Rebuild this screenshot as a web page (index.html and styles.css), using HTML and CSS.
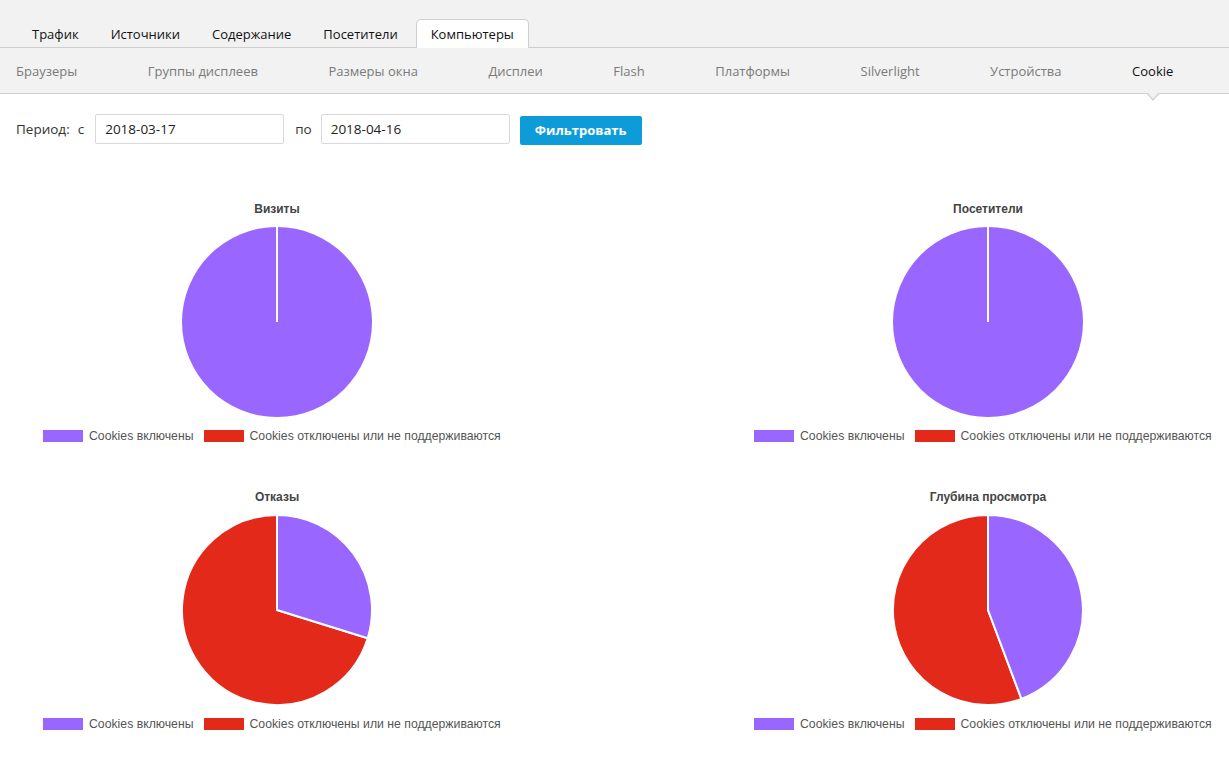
FILE: index.html
```html
<!DOCTYPE html>
<html lang="ru">
<head>
<meta charset="utf-8">
<title>Cookie</title>
<link rel="stylesheet" href="styles.css">
</head>
<body>
<div class="page">
  <header class="topbar">
    <nav class="tabs">
      <a class="tab">Трафик</a>
      <a class="tab">Источники</a>
      <a class="tab">Содержание</a>
      <a class="tab">Посетители</a>
      <a class="tab active">Компьютеры</a>
    </nav>
  </header>
  <nav class="subnav">
    <a class="subitem">Браузеры</a>
    <a class="subitem">Группы дисплеев</a>
    <a class="subitem">Размеры окна</a>
    <a class="subitem">Дисплеи</a>
    <a class="subitem">Flash</a>
    <a class="subitem">Платформы</a>
    <a class="subitem">Silverlight</a>
    <a class="subitem">Устройства</a>
    <a class="subitem current">Cookie</a>
  </nav>

  <form class="filter">
    <span class="lbl">Период:</span>
    <span class="lbl small">с</span>
    <input class="date" type="text" value="2018-03-17">
    <span class="lbl po">по</span>
    <input class="date" type="text" value="2018-04-16">
    <button class="btn" type="button">Фильтровать</button>
  </form>

  <section class="charts">
    <div class="chart">
      <div class="title">Визиты</div>
      <svg class="pie" viewBox="0 0 192 192" width="192" height="192">
        <circle cx="96" cy="96" r="95" fill="#9966ff"/>
        <line x1="96" y1="96" x2="96" y2="0" stroke="#fff" stroke-width="2"/>
      </svg>
      <div class="legend">
        <span class="sw purple"></span><span class="lt">Cookies включены</span>
        <span class="sw red"></span><span class="lt">Cookies отключены или не поддерживаются</span>
      </div>
    </div>
    <div class="chart">
      <div class="title">Посетители</div>
      <svg class="pie" viewBox="0 0 192 192" width="192" height="192">
        <circle cx="96" cy="96" r="95" fill="#9966ff"/>
        <line x1="96" y1="96" x2="96" y2="0" stroke="#fff" stroke-width="2"/>
      </svg>
      <div class="legend">
        <span class="sw purple"></span><span class="lt">Cookies включены</span>
        <span class="sw red"></span><span class="lt">Cookies отключены или не поддерживаются</span>
      </div>
    </div>
    <div class="chart">
      <div class="title">Отказы</div>
      <svg class="pie" viewBox="0 0 192 192" width="192" height="192">
        <path d="M96,96 L186.7,124.25 A95,95 0 1 1 96,1 Z" fill="#e2291a" stroke="#fff" stroke-width="2" stroke-linejoin="round"/>
        <path d="M96,96 L96,1 A95,95 0 0 1 186.7,124.25 Z" fill="#9966ff" stroke="#fff" stroke-width="2" stroke-linejoin="round"/>
      </svg>
      <div class="legend">
        <span class="sw purple"></span><span class="lt">Cookies включены</span>
        <span class="sw red"></span><span class="lt">Cookies отключены или не поддерживаются</span>
      </div>
    </div>
    <div class="chart">
      <div class="title">Глубина просмотра</div>
      <svg class="pie" viewBox="0 0 192 192" width="192" height="192">
        <path d="M96,96 L129.4,184.9 A95,95 0 1 1 96,1 Z" fill="#e2291a" stroke="#fff" stroke-width="2" stroke-linejoin="round"/>
        <path d="M96,96 L96,1 A95,95 0 0 1 129.4,184.9 Z" fill="#9966ff" stroke="#fff" stroke-width="2" stroke-linejoin="round"/>
      </svg>
      <div class="legend">
        <span class="sw purple"></span><span class="lt">Cookies включены</span>
        <span class="sw red"></span><span class="lt">Cookies отключены или не поддерживаются</span>
      </div>
    </div>
  </section>
</div>
</body>
</html>
```
FILE: styles.css
```css
html, body {
  margin: 0;
  padding: 0;
  background: #fff;
}
body {
  font-family: "Open Sans", "Noto Sans", sans-serif;
  color: #222;
  overflow: hidden;
}
.page {
  width: 1229px;
  height: 760px;
  overflow: hidden;
}
.topbar {
  background: #f2f2f2;
  height: 47px;
  border-bottom: 1px solid #cfcfcf;
  display: flex;
  align-items: flex-end;
}
.tabs {
  display: flex;
  padding-left: 16px;
  margin-bottom: -1px;
}
.tab {
  font-size: 13px;
  color: #111;
  padding: 1px 15px 0 15px;
  height: 29px;
  box-sizing: border-box;
  border: 1px solid transparent;
  border-bottom: none;
  border-radius: 5px 5px 0 0;
  line-height: 27px;
}
.tab.active {
  background: #fff;
  border-color: #cfcfcf;
  padding: 1px 14px 0 14px;
  margin-left: 2px;
}
.subnav {
  background: #f2f2f2;
  height: 45px;
  border-bottom: 1px solid #cfcfcf;
  display: flex;
  align-items: center;
  padding-left: 16px;
  gap: 70.5px;
  position: relative;
}
.subitem {
  font-size: 13px;
  color: #7a7a7a;
  position: relative;
  white-space: nowrap;
}
.subitem.current {
  color: #111;
}
.subitem.current::after {
  content: "";
  position: absolute;
  left: 50%;
  top: 32px;
  margin-left: -6px;
  width: 0;
  height: 0;
  border-left: 6px solid transparent;
  border-right: 6px solid transparent;
  border-top: 7px solid #cfcfcf;
}
.subitem.current::before {
  content: "";
  position: absolute;
  left: 50%;
  top: 31px;
  margin-left: -5px;
  width: 0;
  height: 0;
  border-left: 5px solid transparent;
  border-right: 5px solid transparent;
  border-top: 6px solid #f2f2f2;
  z-index: 2;
}
.filter {
  display: flex;
  align-items: center;
  padding: 20px 16px 0 16px;
  height: 30px;
}
.lbl {
  font-size: 13.5px;
  color: #333;
}
.lbl.small {
  margin-left: 8px;
  margin-right: 11px;
}
.lbl.po {
  margin-left: 11px;
  margin-right: 9px;
}
.date {
  width: 189px;
  height: 30px;
  box-sizing: border-box;
  border: 1px solid #d9d9d9;
  border-radius: 2px;
  padding: 0 9px;
  font-family: "Open Sans", "Noto Sans", sans-serif;
  font-size: 13.5px;
  color: #222;
  outline: none;
}
.btn {
  margin-left: 10px;
  width: 122px;
  height: 29px;
  margin-top: 2px;
  border: none;
  border-radius: 2px;
  background: #0e9cd9;
  color: #fff;
  font-family: "Open Sans", "Noto Sans", sans-serif;
  font-weight: 700;
  font-size: 13px;
}
.charts {
  display: grid;
  grid-template-columns: 554px 554px;
  column-gap: 157px;
  row-gap: 47px;
  margin-top: 58px;
}
.chart {
  display: flex;
  flex-direction: column;
  align-items: center;
}
.title {
  font-family: "Liberation Sans", Arial, sans-serif;
  font-weight: 700;
  font-size: 12px;
  line-height: 14px;
  color: #444;
  height: 14px;
}
.pie {
  margin-top: 10px;
  display: block;
}
.legend {
  align-self: stretch;
  display: flex;
  align-items: center;
  padding-left: 43px;
  margin-top: 11px;
  height: 14px;
  font-family: "Liberation Sans", Arial, sans-serif;
  font-size: 12.25px;
  color: #555;
}
.sw {
  width: 40px;
  height: 12px;
  margin-right: 6px;
}
.sw.red {
  margin-left: 10px;
}
.sw.purple { background: #9966ff; }
.sw.red { background: #e2291a; }
.lt { white-space: nowrap; }
```
